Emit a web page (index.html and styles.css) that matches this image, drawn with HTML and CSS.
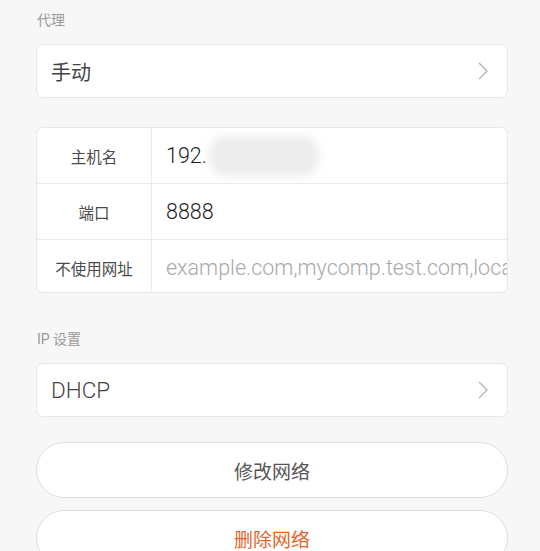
FILE: index.html
```html
<!DOCTYPE html>
<html lang="zh">
<head>
<meta charset="utf-8">
<link rel="stylesheet" href="styles.css">
</head>
<body>
<div class="page">
  <div class="section-label">代理</div>
  <div class="card select">
    <span class="select-text">手动</span>
    <svg class="chevron" width="12" height="20" viewBox="0 0 12 20"><path d="M2 2 L10 10 L2 18" fill="none" stroke="#b5b5b5" stroke-width="1.4"/></svg>
  </div>

  <div class="card table">
    <div class="row">
      <div class="cell-label">主机名</div>
      <div class="cell-value">192.<span class="blur"></span></div>
    </div>
    <div class="row">
      <div class="cell-label">端口</div>
      <div class="cell-value">8888</div>
    </div>
    <div class="row">
      <div class="cell-label">不使用网址</div>
      <div class="cell-value placeholder">example.com,mycomp.test.com,loca</div>
    </div>
  </div>

  <div class="section-label second">IP 设置</div>
  <div class="card select">
    <span class="select-text latin">DHCP</span>
    <svg class="chevron" width="12" height="20" viewBox="0 0 12 20"><path d="M2 2 L10 10 L2 18" fill="none" stroke="#b5b5b5" stroke-width="1.4"/></svg>
  </div>

  <div class="btn modify">修改网络</div>
  <div class="btn delete">删除网络</div>
</div>
</body>
</html>
```

FILE: styles.css
```css
html, body {
  margin: 0;
  padding: 0;
  background: #f7f7f7;
  font-family: Roboto, "Noto Sans CJK SC", sans-serif;
}
.page {
  width: 472px;
  padding-left: 36px;
  height: 551px;
  overflow: hidden;
}
.section-label {
  height: 44px;
  box-sizing: border-box;
  padding-top: 9px;
  padding-left: 1px;
  font-size: 14px;
  line-height: 22px;
  color: #9a9a9a;
}
.section-label.second {
  margin-top: 26px;
}
.card {
  background: #fff;
  border: 1px solid #e7e7e7;
  border-radius: 7px;
  box-sizing: border-box;
}
.select {
  height: 54px;
  display: flex;
  align-items: center;
  justify-content: space-between;
  padding: 0 18px 0 14px;
}
.select-text {
  font-size: 20px;
  color: #444;
}
.select-text.latin {
  font-size: 22.5px;
  font-weight: 300;
  color: #444;
}
.chevron {
  display: block;
}
.table {
  margin-top: 29px;
  height: 166px;
  overflow: hidden;
}
.row {
  display: flex;
  height: 55px;
  border-bottom: 1px solid #ebebeb;
}
.row:last-child {
  border-bottom: none;
}
.cell-label {
  width: 114px;
  flex: none;
  border-right: 1px solid #ebebeb;
  display: flex;
  align-items: center;
  justify-content: center;
  font-size: 15.5px;
  color: #4a4a4a;
}
.cell-value {
  flex: 1;
  display: flex;
  align-items: center;
  padding-left: 14px;
  font-size: 21.5px;
  font-weight: 300;
  color: #1e1e1e;
  white-space: nowrap;
  overflow: hidden;
}
.cell-value.placeholder {
  color: #a8a8a8;
}
.blur {
  display: inline-block;
  width: 110px;
  height: 40px;
  margin-left: 2px;
  background: #ececec;
  border-radius: 18px;
  filter: blur(4px);
}
.btn {
  height: 56px;
  border: 1px solid #dedede;
  border-radius: 28px;
  background: #fff;
  box-sizing: border-box;
  display: flex;
  align-items: center;
  justify-content: center;
  font-size: 19px;
  color: #555;
}
.modify {
  margin-top: 25px;
}
.delete {
  margin-top: 12px;
  color: #e5652d;
}
```
